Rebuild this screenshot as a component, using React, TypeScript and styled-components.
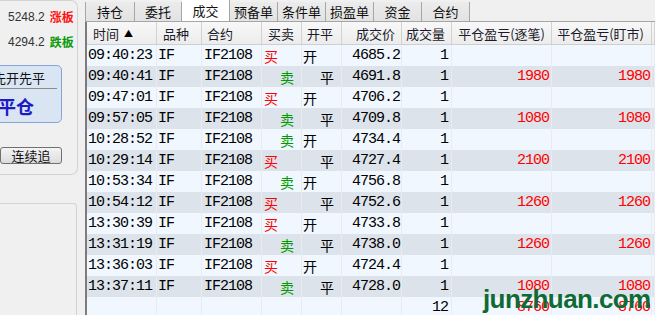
import React from 'react';
import styled, { createGlobalStyle } from 'styled-components';

const Global = createGlobalStyle`
  html, body { margin: 0; padding: 0; background: #f0f0f0; }
  body { width: 655px; height: 315px; overflow: hidden; font-family: "Noto Sans CJK SC", sans-serif; }
`;

const Screen = styled.div`
  position: relative;
  display: flex;
  width: 655px;
  height: 315px;
  overflow: hidden;
  background: #f0f0f0;
`;

const SidePane = styled.div`
  width: 85px;
  flex-shrink: 0;
  display: flex;
  flex-direction: column;
  overflow: hidden;
`;

const UpperGroup = styled.div`
  box-sizing: border-box;
  width: 78px;
  height: 175px;
  border: 1px solid #d3d3d3;
  border-left: none;
  border-radius: 0 7px 7px 0;
  display: flex;
  flex-direction: column;
  padding-top: 3px;
`;

const PriceLine = styled.div`
  display: flex;
  align-items: center;
  height: 25px;
  padding-left: 8px;
  gap: 5px;
  font-family: "Liberation Sans", Arial, sans-serif;
  font-size: 12px;
  color: #333;
`;

const Limit = styled.span<{ $up: boolean }>`
  font-family: "Noto Sans CJK SC", sans-serif;
  font-size: 12px;
  font-weight: 700;
  color: ${p => (p.$up ? '#ff1010' : '#0a9a0a')};
`;

const ModeBox = styled.div`
  box-sizing: border-box;
  margin-top: 11px;
  margin-left: -18px;
  width: 80px;
  height: 58px;
  border: 1px solid #86a4d8;
  border-radius: 5px;
  background: #dae5f4;
  display: flex;
  flex-direction: column;
`;

const ModeLabel = styled.div`
  height: 22px;
  margin-right: 4px;
  padding-left: 10px;
  display: flex;
  align-items: center;
  border-bottom: 1px solid #8c8c8c;
  font-size: 13px;
  color: #111;
`;

const ModeValue = styled.div`
  flex: 1;
  padding-left: 15px;
  display: flex;
  align-items: center;
  font-size: 18px;
  font-weight: 700;
  color: #1c1cc4;
`;

const ChaseButton = styled.button`
  box-sizing: border-box;
  margin-top: 24px;
  width: 62px;
  height: 17px;
  padding: 0;
  border: 1px solid #707070;
  border-radius: 3px;
  background: linear-gradient(#f4f4f4, #dcdcdc);
  font-family: "Noto Sans CJK SC", sans-serif;
  font-size: 13px;
  line-height: 15px;
  color: #111;
`;

const LowerGroup = styled.div`
  box-sizing: border-box;
  margin-top: 28px;
  width: 77px;
  flex: 1;
  border-top: 1px solid #d3d3d3;
  border-right: 1px solid #d3d3d3;
  border-top-right-radius: 4px;
`;

const MainPane = styled.div`
  flex: 1;
  min-width: 0;
  display: flex;
  flex-direction: column;
`;

const TabBar = styled.div`
  height: 21px;
  display: flex;
  align-items: flex-end;
  border-bottom: 1px solid #a6a6a6;
`;

const Tab = styled.div<{ $active?: boolean; $w: number }>`
  box-sizing: border-box;
  width: ${p => p.$w}px;
  height: ${p => (p.$active ? 21 : 19)}px;
  display: flex;
  align-items: center;
  justify-content: center;
  background: ${p => (p.$active ? '#ffffff' : 'linear-gradient(#ececec, #e2e2e2)')};
  border-right: 1px solid #a6a6a6;
  &:first-child { border-left: 1px solid #a6a6a6; }
  font-size: 13px;
  color: #111;
`;

const Table = styled.div`
  flex: 1;
  border-left: 2px solid #7c7c7c;
  display: flex;
  flex-direction: column;
  background: #f1f7fe;
`;

const GRID = '70px 45px 60px 40px 40px 60px 50px 100px 100px 1fr';

const HeaderRow = styled.div`
  display: grid;
  grid-template-columns: ${GRID};
  height: 23px;
  box-sizing: border-box;
  border-bottom: 1px solid #cfcfcf;
  background: linear-gradient(#f8f8f8, #ececec);
`;

const HeadCell = styled.div<{ $align: 'left' | 'right'; $pad: number }>`
  display: flex;
  align-items: center;
  justify-content: ${p => (p.$align === 'left' ? 'flex-start' : 'flex-end')};
  padding: 0 ${p => (p.$align === 'right' ? p.$pad : 0)}px 0 ${p => (p.$align === 'left' ? p.$pad : 0)}px;
  border-right: 1px solid #d2d2d2;
  font-size: 13px;
  color: #1a1a2a;
  white-space: nowrap;
  overflow: hidden;
`;

const SortMark = styled.span`
  font-size: 9px;
  margin-left: 5px;
  color: #000;
`;

const DataRow = styled.div<{ $shade: boolean }>`
  display: grid;
  grid-template-columns: ${GRID};
  height: 21px;
  flex-shrink: 0;
  background: ${p => (p.$shade ? '#dde3eb' : '#f1f7fe')};
`;

const Cell = styled.div<{ $align?: 'left' | 'right'; $pad?: number; $color?: string }>`
  display: flex;
  align-items: center;
  justify-content: ${p => (p.$align === 'right' ? 'flex-end' : 'flex-start')};
  padding-left: ${p => (p.$align === 'right' ? 0 : p.$pad ?? 1)}px;
  padding-right: ${p => (p.$align === 'right' ? p.$pad ?? 2 : 0)}px;
  border-right: 1px solid #e8ebef;
  font-family: "Liberation Mono", "Courier New", monospace;
  font-size: 15px;
  letter-spacing: -1px;
  color: ${p => p.$color ?? '#000'};
  white-space: nowrap;
  overflow: hidden;
`;

const Glyph = styled.span<{ $color: string }>`
  font-family: "Noto Sans CJK SC", sans-serif;
  font-size: 14px;
  letter-spacing: 0;
  color: ${p => p.$color};
`;

const Watermark = styled.div`
  position: absolute;
  left: 483px;
  top: 286px;
  font-family: "Liberation Sans", Arial, sans-serif;
  font-weight: 700;
  font-size: 26px;
  line-height: 26px;
  letter-spacing: -0.6px;
  color: #0f6a34;
  pointer-events: none;
`;

type Trade = {
  time: string;
  side: '买' | '卖';
  oc: '开' | '平';
  price: string;
  p?: string;
};

const trades: Trade[] = [
  { time: '09:40:23', side: '买', oc: '开', price: '4685.2' },
  { time: '09:40:41', side: '卖', oc: '平', price: '4691.8', p: '1980' },
  { time: '09:47:01', side: '买', oc: '开', price: '4706.2' },
  { time: '09:57:05', side: '卖', oc: '平', price: '4709.8', p: '1080' },
  { time: '10:28:52', side: '卖', oc: '开', price: '4734.4' },
  { time: '10:29:14', side: '买', oc: '平', price: '4727.4', p: '2100' },
  { time: '10:53:34', side: '卖', oc: '开', price: '4756.8' },
  { time: '10:54:12', side: '买', oc: '平', price: '4752.6', p: '1260' },
  { time: '13:30:39', side: '买', oc: '开', price: '4733.8' },
  { time: '13:31:19', side: '卖', oc: '平', price: '4738.0', p: '1260' },
  { time: '13:36:03', side: '买', oc: '开', price: '4724.4' },
  { time: '13:37:11', side: '卖', oc: '平', price: '4728.0', p: '1080' },
];

const tabs = ['持仓', '委托', '成交', '预备单', '条件单', '损盈单', '资金', '合约'];
const tabWidths = [50, 47, 48, 48, 48, 48, 48, 48];

const headers: { label: string; align: 'left' | 'right'; pad: number; sort?: boolean }[] = [
  { label: '时间', align: 'left', pad: 6, sort: true },
  { label: '品种', align: 'left', pad: 6 },
  { label: '合约', align: 'left', pad: 5 },
  { label: '买卖', align: 'left', pad: 6 },
  { label: '开平', align: 'left', pad: 5 },
  { label: '成交价', align: 'right', pad: 6 },
  { label: '成交量', align: 'right', pad: 6 },
  { label: '平仓盈亏(逐笔)', align: 'right', pad: 6 },
  { label: '平仓盈亏(盯市)', align: 'right', pad: 7 },
  { label: '', align: 'left', pad: 0 },
];

export default function App() {
  return (
    <>
      <Global />
      <Screen>
        <SidePane>
          <UpperGroup>
            <PriceLine>
              <span>5248.2</span>
              <Limit $up>涨板</Limit>
            </PriceLine>
            <PriceLine>
              <span>4294.2</span>
              <Limit $up={false}>跌板</Limit>
            </PriceLine>
            <ModeBox>
              <ModeLabel>先开先平</ModeLabel>
              <ModeValue>平仓</ModeValue>
            </ModeBox>
            <ChaseButton>连续追</ChaseButton>
          </UpperGroup>
          <LowerGroup />
        </SidePane>
        <MainPane>
          <TabBar>
            {tabs.map((t, i) => (
              <Tab key={t} $w={tabWidths[i]} $active={t === '成交'}>
                {t}
              </Tab>
            ))}
          </TabBar>
          <Table>
            <HeaderRow>
              {headers.map((h, i) => (
                <HeadCell key={i} $align={h.align} $pad={h.pad}>
                  {h.label}
                  {h.sort && <SortMark>▲</SortMark>}
                </HeadCell>
              ))}
            </HeaderRow>
            {trades.map((t, i) => (
              <DataRow key={t.time} $shade={i % 2 === 1}>
                <Cell $pad={1}>{t.time}</Cell>
                <Cell $pad={1}>IF</Cell>
                <Cell $pad={2}>IF2108</Cell>
                <Cell $pad={t.side === '买' ? 2 : 18}>
                  <Glyph $color={t.side === '买' ? '#ff0000' : '#009a00'}>{t.side}</Glyph>
                </Cell>
                <Cell $pad={t.oc === '开' ? 1 : 18}>
                  <Glyph $color="#000">{t.oc}</Glyph>
                </Cell>
                <Cell $align="right" $pad={1}>{t.price}</Cell>
                <Cell $align="right" $pad={3}>1</Cell>
                <Cell $align="right" $pad={2} $color="#ff0000">{t.p ?? ''}</Cell>
                <Cell $align="right" $pad={1} $color="#ff0000">{t.p ?? ''}</Cell>
                <Cell />
              </DataRow>
            ))}
            <DataRow $shade={false}>
              <Cell />
              <Cell />
              <Cell />
              <Cell />
              <Cell />
              <Cell />
              <Cell $align="right" $pad={3}>12</Cell>
              <Cell $align="right" $pad={2} $color="#ff0000">8760</Cell>
              <Cell $align="right" $pad={1} $color="#ff0000">8760</Cell>
              <Cell />
            </DataRow>
          </Table>
        </MainPane>
        <Watermark>junzhuan.com</Watermark>
      </Screen>
    </>
  );
}
